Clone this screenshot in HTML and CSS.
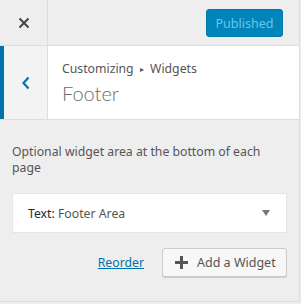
FILE: index.html
```html
<!DOCTYPE html>
<html lang="en">
<head>
    <meta charset="UTF-8">
    <title>Customizing Widgets: Footer</title>
    <link rel="stylesheet" href="styles.css">
</head>
<body>
    <div class="sidebar">
        <!-- Header bar -->
        <div class="topbar">
            <a class="close-btn" href="#">
                <svg width="12" height="12" viewBox="0 0 12 12"><path d="M1.5 1.5l9 9M10.5 1.5l-9 9" stroke="#444" stroke-width="2"/></svg>
            </a>
            <button class="publish-btn" disabled>Published</button>
        </div>

        <!-- Section title -->
        <div class="section-head">
            <a class="back-btn" href="#">
                <svg width="10" height="14" viewBox="0 0 10 14"><path d="M7.5 1.5 2.5 7l5 5.5" fill="none" stroke="#0073aa" stroke-width="2.2"/></svg>
            </a>
            <div class="section-title">
                <div class="crumbs">Customizing <span class="sep">&#9656;</span> Widgets</div>
                <h3>Footer</h3>
            </div>
        </div>

        <!-- Widget area -->
        <div class="section-body">
            <p class="desc">Optional widget area at the bottom of each page</p>
            <div class="widget">
                <span class="widget-title"><b>Text:</b> Footer Area</span>
                <span class="arrow"></span>
            </div>
            <div class="actions">
                <a href="#" class="reorder">Reorder</a>
                <button class="add-btn"><span class="plus"></span>Add a Widget</button>
            </div>
        </div>
    </div>
</body>
</html>
```
FILE: styles.css
```css
body {
    margin: 0;
    font-family: "Noto Sans", "Open Sans", sans-serif;
    font-size: 12.25px;
    background-color: #eee;
    color: #555;
}
.sidebar {
    width: 299px;
    height: 301px;
    border-right: 1px solid #ddd;
    border-bottom: 1px solid #ddd;
    background-color: #eee;
}
.topbar {
    display: flex;
    align-items: center;
    height: 45px;
    border-bottom: 1px solid #ddd;
}
.close-btn {
    width: 47px;
    height: 45px;
    border-right: 1px solid #ddd;
    display: flex;
    align-items: center;
    justify-content: center;
}
.publish-btn {
    margin-left: auto;
    margin-right: 16px;
    margin-top: 1px;
    width: 77px;
    height: 28px;
    background-color: #0085ba;
    border: 1px solid #0079ab;
    border-radius: 3px;
    color: #66c6e4;
    font-family: inherit;
    font-size: 12.5px;
    padding: 0;
}
.section-head {
    display: flex;
    height: 73px;
    background-color: #fff;
    border-bottom: 1px solid #ddd;
}
.back-btn {
    width: 43px;
    border-left: 4px solid #0073aa;
    border-right: 1px solid #ddd;
    background-color: #f3f3f4;
    display: flex;
    align-items: center;
    justify-content: center;
}
.section-title {
    padding: 13px 14px 0 14px;
}
.crumbs {
    line-height: 20px;
    color: #555;
}
.sep {
    font-size: 8px;
    margin: 0 3px;
    vertical-align: 1px;
}
h3 {
    margin: 1px 0 0;
    font-family: Lato, "Noto Sans", sans-serif;
    font-size: 20px;
    font-weight: 300;
    line-height: 26px;
    color: #6c6c6c;
}
.section-body {
    padding: 24px 12px 0 12px;
}
.desc {
    margin: 0 0 17px;
    line-height: 16px;
    color: #555;
}
.widget {
    display: flex;
    align-items: center;
    height: 38px;
    background-color: #fff;
    border: 1px solid #e5e5e5;
    padding: 0 15px;
}
.widget-title {
    color: #555;
}
.widget-title b {
    font-weight: 400;
    color: #23282d;
}
.arrow {
    margin-left: auto;
    margin-right: 1px;
    border-left: 4px solid transparent;
    border-right: 4px solid transparent;
    border-top: 6px solid #72777c;
}
.actions {
    display: flex;
    align-items: center;
    justify-content: flex-end;
    margin-top: 15px;
}
.reorder {
    color: #0073aa;
    margin-right: 18px;
}
.add-btn {
    display: flex;
    align-items: center;
    width: 125px;
    height: 29px;
    background-color: #f7f7f7;
    border: 1px solid #ccc;
    border-radius: 3px;
    box-shadow: 0 1px 0 #ccc;
    color: #555;
    font-family: inherit;
    font-size: 12.5px;
    padding: 0 0 0 12px;
}
.plus {
    position: relative;
    width: 13px;
    height: 13px;
    margin-right: 9px;
}
.plus::before, .plus::after {
    content: "";
    position: absolute;
    background-color: #555;
}
.plus::before {
    left: 5px;
    top: 0;
    width: 3px;
    height: 13px;
}
.plus::after {
    left: 0;
    top: 5px;
    width: 13px;
    height: 3px;
}
```
